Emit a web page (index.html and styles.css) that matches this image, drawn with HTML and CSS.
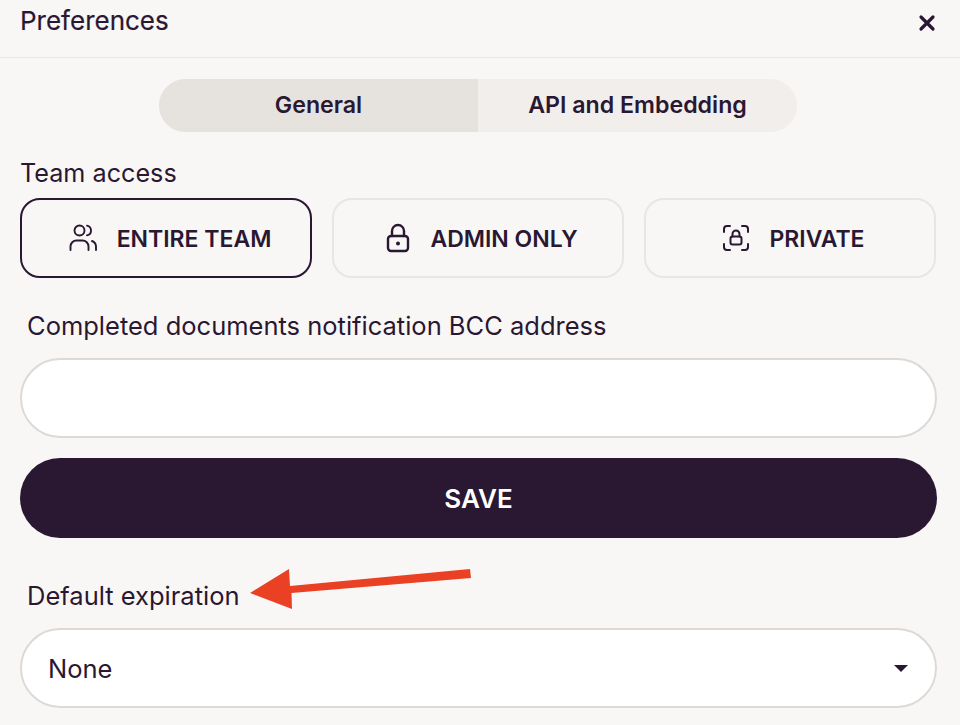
FILE: index.html
```html
<!DOCTYPE html>
<html lang="en">
<head>
    <meta charset="UTF-8">
    <meta name="viewport" content="width=device-width, initial-scale=1.0">
    <title>Preferences</title>
    <link rel="stylesheet" href="styles.css">
</head>
<body>
    <div class="header">
        <span class="header-title">Preferences</span>
        <svg class="close-icon" width="18" height="18" viewBox="0 0 18 18" fill="none" stroke="#2a1732" stroke-width="3.2" stroke-linecap="round">
            <path d="M3 3L15 15M15 3L3 15"/>
        </svg>
    </div>
    <div class="content">
        <div class="tabs">
            <div class="tab tab-active">General</div>
            <div class="tab">API and Embedding</div>
        </div>
        <p class="label label-team">Team access</p>
        <div class="access">
            <div class="access-btn access-btn-active">
                <svg width="30" height="30" viewBox="0 0 30 30" fill="none" stroke="#2a1732" stroke-width="1.9" stroke-linecap="round">
                    <circle cx="11.5" cy="7.5" r="5"/>
                    <path d="M19 2.6a5 5 0 0 1 0 9.8"/>
                    <path d="M2.5 27v-3.5a6 6 0 0 1 6-6h6a6 6 0 0 1 6 6V27"/>
                    <path d="M24 18a6 6 0 0 1 4 5.5V27"/>
                </svg>
                <span class="access-text">ENTIRE TEAM</span>
            </div>
            <div class="access-btn">
                <svg width="26" height="30" viewBox="0 0 26 30" fill="none" stroke="#2a1732" stroke-width="2.4" stroke-linecap="round">
                    <rect x="3" y="13" width="20" height="15" rx="3"/>
                    <path d="M7 13V8a6 6 0 0 1 12 0v5"/>
                    <circle cx="13" cy="20.5" r="2" fill="#2a1732" stroke="none"/>
                </svg>
                <span class="access-text">ADMIN ONLY</span>
            </div>
            <div class="access-btn">
                <svg width="28" height="28" viewBox="0 0 28 28" fill="none" stroke="#2a1732" stroke-width="2" stroke-linecap="round">
                    <path d="M2 8V5a3 3 0 0 1 3-3h3M20 2h3a3 3 0 0 1 3 3v3M26 20v3a3 3 0 0 1-3 3h-3M8 26H5a3 3 0 0 1-3-3v-3"/>
                    <rect x="8.5" y="12.5" width="11" height="8" rx="2"/>
                    <path d="M10.5 12.500V10a3.500 3.500 0 0 1 7 0v2.500"/>
                </svg>
                <span class="access-text">PRIVATE</span>
            </div>
        </div>
        <label class="label label-field label-bcc" for="bcc">Completed documents notification BCC address</label>
        <input class="field" type="text" id="bcc">
        <button class="save">SAVE</button>
        <label class="label label-field label-exp">Default expiration</label>
        <div class="field select">
            <span>None</span>
            <span class="caret"></span>
        </div>
    </div>
    <svg class="arrow" width="230" height="50" viewBox="0 0 230 50">
        <path d="M0 24L39 0L40 17L220 0L221 9L41.500 24L42 40Z" fill="#ea4125"/>
    </svg>
</body>
</html>
```

FILE: styles.css
```css
body {
    font-family: Inter, "Liberation Sans", sans-serif;
    margin: 0;
    background-color: #f9f7f6;
    color: #2a1732;
    height: 725px;
    overflow: hidden;
    position: relative;
}
.header {
    height: 58px;
    box-sizing: border-box;
    border-bottom: 1px solid #e8e6e4;
    padding: 6px 24px 0 20px;
    display: flex;
    justify-content: space-between;
    align-items: flex-start;
}
.header-title {
    font-size: 26px;
    line-height: 30px;
    -webkit-text-stroke: 0.2px #2a1732;
}
.close-icon {
    margin-top: 8px;
}
.content {
    padding: 21px 23px 0 20px;
}
.tabs {
    width: 638px;
    height: 53px;
    margin-left: 139px;
    display: flex;
    border-radius: 27px;
    overflow: hidden;
    background-color: #f1eeeb;
}
.tab {
    flex: 1;
    display: flex;
    align-items: center;
    justify-content: center;
    padding-bottom: 2px;
    font-size: 23.2px;
    font-weight: 600;
}
.tab-active {
    background-color: #e6e3df;
}
.label {
    display: block;
    margin: 0;
    font-size: 25.5px;
    line-height: 30px;
}
.label-team {
    margin-top: 26px;
    font-size: 25.2px;
}
.access {
    display: flex;
    gap: 20px;
    margin-top: 10px;
    margin-right: 1px;
}
.access-btn {
    flex: 1;
    height: 80px;
    box-sizing: border-box;
    border: 2px solid #e8e6e4;
    border-radius: 20px;
    display: flex;
    align-items: center;
    justify-content: center;
    padding-left: 7px;
    gap: 19px;
    font-size: 23px;
    font-weight: 600;
}
.access-btn-active {
    border-color: #2a1732;
}
.access-text {
    padding-top: 2px;
}
.label-field {
    padding-left: 7px;
}
.label-bcc {
    margin-top: 33px;
}
.field {
    display: flex;
    align-items: center;
    justify-content: space-between;
    width: 100%;
    height: 80px;
    box-sizing: border-box;
    margin-top: 17px;
    padding: 0 26px;
    background-color: #ffffff;
    border: 2px solid #dcd9d7;
    border-radius: 40px;
    font-family: inherit;
    font-size: 25.5px;
    color: inherit;
}
.save {
    display: block;
    width: 100%;
    height: 80px;
    margin-top: 20px;
    border: none;
    border-radius: 40px;
    background-color: #2a1732;
    color: #ffffff;
    font-family: inherit;
    font-size: 26px;
    font-weight: 600;
}
.label-exp {
    margin-top: 43px;
}
.select {
    padding-right: 27px;
}
.caret {
    width: 0;
    height: 0;
    border-left: 7px solid transparent;
    border-right: 7px solid transparent;
    border-top: 7px solid #2a1732;
}
.arrow {
    position: absolute;
    left: 250px;
    top: 569px;
}
```
